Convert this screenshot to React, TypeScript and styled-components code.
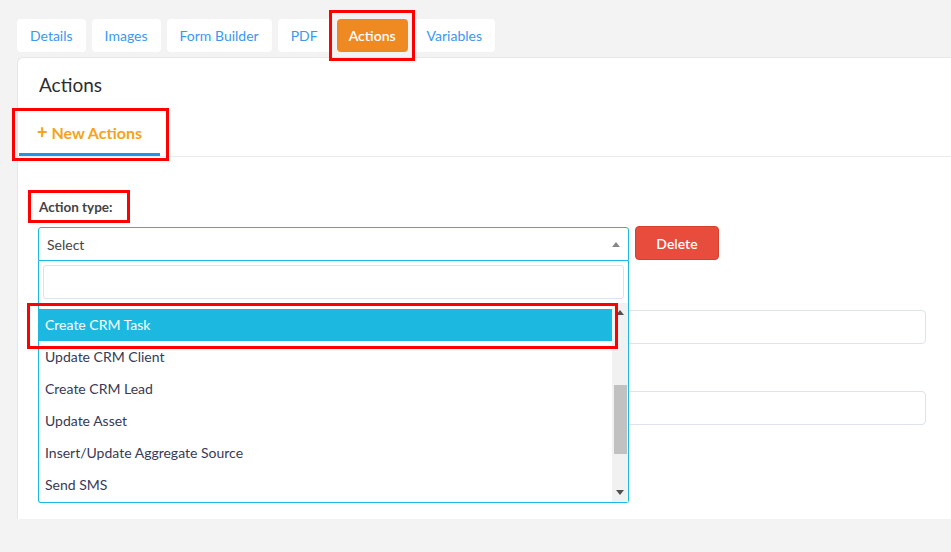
import styled, { createGlobalStyle } from "styled-components";

const GlobalStyle = createGlobalStyle`
html, body {
  margin: 0;
  padding: 0;
  background: #f3f3f3;
  overflow: hidden;
  font-family: Lato, "Noto Sans", "Liberation Sans", sans-serif;
}
* { box-sizing: border-box; }
`;

const Page = styled.div`
padding: 19px 0 0 17px;
`;

const TabBar = styled.nav`
display: flex;
gap: 6px;
`;

const Tab = styled.div<{ $active?: boolean }>`
position: relative;
height: 33px;
padding: 0 ${p => (p.$active ? "12px" : "13px")};
display: flex;
align-items: center;
border-radius: 4px;
font-size: 14px;
background: ${p => (p.$active ? "#ef8a23" : "#ffffff")};
color: ${p => (p.$active ? "#ffffff" : "#3b98ef")};
font-weight: ${p => (p.$active ? 600 : 400)};
`;

// red annotation frame drawn over the marked part
const Mark = styled.span<{ $t: number; $r: number; $b: number; $l: number }>`
position: absolute;
top: ${p => p.$t}px;
right: ${p => p.$r}px;
bottom: ${p => p.$b}px;
left: ${p => p.$l}px;
border: 3px solid #ff0000;
pointer-events: none;
z-index: 20;
`;

const Card = styled.section`
margin-top: 5px;
height: 462px;
background: #fff;
border: 1px solid #e6e6e6;
border-right: none;
border-bottom: none;
border-radius: 6px 0 0 0;
box-shadow: 0 5px 0 #e2e2e2;
`;

const CardHeader = styled.h2`
margin: 0;
padding: 14px 20px 0 21px;
height: 50px;
font-size: 19px;
line-height: 26px;
font-weight: 400;
color: #2e2e2e;
`;

const NavTabs = styled.div`
display: flex;
border-bottom: 1px solid #e8ebef;
padding-left: 1px;
`;

const NavItem = styled.div`
position: relative;
padding: 13px 0 9px;
line-height: 22px;
font-size: 16px;
font-weight: 700;
color: #f5a31c;
border-bottom: 3px solid #2592e6;
width: 141px;
text-align: center;
`;

const Plus = styled.span`
font-size: 18px;
font-weight: 900;
margin-right: 4px;
`;

const Body = styled.div`
padding: 39px 20px 0 20px;
`;

const Label = styled.div`
position: relative;
display: inline-block;
font-size: 13.5px;
line-height: 20px;
font-weight: 700;
color: #444;
margin-left: 1px;
margin-bottom: 10px;
`;

const Row = styled.div`
display: flex;
gap: 6px;
align-items: flex-start;
`;

const SelectWrap = styled.div`
position: relative;
width: 591px;
`;

const SelectBox = styled.div`
height: 34px;
border: 1px solid #1cb8e0;
border-radius: 3px 3px 0 0;
display: flex;
align-items: center;
justify-content: space-between;
padding: 0 8px 0 8px;
font-size: 14px;
color: #444;
`;

const Caret = styled.span<{ $down?: boolean; $color?: string }>`
width: 0;
height: 0;
border-left: 4px solid transparent;
border-right: 4px solid transparent;
${p =>
  p.$down
    ? `border-top: 5px solid ${p.$color || "#888"};`
    : `border-bottom: 5px solid ${p.$color || "#888"};`}
`;

const Dropdown = styled.div`
position: absolute;
top: 34px;
left: 0;
width: 100%;
background: #fff;
border: 1px solid #1cb8e0;
border-top: none;
border-radius: 0 0 3px 3px;
z-index: 10;
`;

const SearchArea = styled.div`
padding: 4px;
`;

const SearchInput = styled.div`
height: 34px;
border: 1px solid #dde3ea;
border-radius: 3px;
`;

const List = styled.div`
display: flex;
height: 199px;
`;

const Options = styled.div`
flex: 1;
padding-top: 6px;
`;

const Option = styled.div<{ $selected?: boolean }>`
position: relative;
height: 32px;
line-height: 32px;
padding-left: 6px;
font-size: 14px;
background: ${p => (p.$selected ? "#1cb8e0" : "transparent")};
color: ${p => (p.$selected ? "#fff" : "#383a55")};
`;

const ScrollBar = styled.div`
width: 16px;
background: #f1f1f1;
display: flex;
flex-direction: column;
align-items: center;
padding: 7px 0 7px;
`;

const Thumb = styled.div`
width: 13px;
height: 69px;
background: #c1c1c1;
margin-top: 70px;
margin-bottom: auto;
`;

const DeleteButton = styled.button`
width: 84px;
height: 34px;
margin-top: -1px;
background: #e74c3c;
border: 1px solid #d6402f;
border-radius: 4px;
color: #fff;
font-family: inherit;
font-size: 14px;
font-weight: 600;
`;

const Input = styled.div<{ $top: number }>`
width: 888px;
height: 34px;
margin-top: ${p => p.$top}px;
border: 1px solid #dde3ea;
border-radius: 4px;
`;

const tabs = ["Details", "Images", "Form Builder", "PDF", "Actions", "Variables"];
const options = [
  "Create CRM Task",
  "Update CRM Client",
  "Create CRM Lead",
  "Update Asset",
  "Insert/Update Aggregate Source",
  "Send SMS",
];

export default function App() {
  return (
    <>
      <GlobalStyle />
      <Page>
        <TabBar>
          {tabs.map(t => (
            <Tab key={t} $active={t === "Actions"}>
              {t}
              {t === "Actions" && <Mark $t={-9} $r={-7} $b={-9} $l={-8} />}
            </Tab>
          ))}
        </TabBar>
        <Card>
          <CardHeader>Actions</CardHeader>
          <NavTabs>
            <NavItem>
              <Plus>+</Plus>New Actions
              <Mark $t={0} $r={-9} $b={-8} $l={-7} />
            </NavItem>
          </NavTabs>
          <Body>
            <Label>
              Action type:
              <Mark $t={-7} $r={-17} $b={-6} $l={-11} />
            </Label>
            <Row>
              <SelectWrap>
                <SelectBox>
                  Select
                  <Caret />
                </SelectBox>
                <Dropdown>
                  <SearchArea>
                    <SearchInput />
                  </SearchArea>
                  <List>
                    <Options>
                      {options.map((o, i) => (
                        <Option key={o} $selected={i === 0}>
                          {o}
                          {i === 0 && <Mark $t={-6} $r={-6} $b={-8} $l={-12} />}
                        </Option>
                      ))}
                    </Options>
                    <ScrollBar>
                      <Caret $color="#505050" />
                      <Thumb />
                      <Caret $down $color="#505050" />
                    </ScrollBar>
                  </List>
                </Dropdown>
              </SelectWrap>
              <DeleteButton>Delete</DeleteButton>
            </Row>
            <Input $top={49} />
            <Input $top={47} />
          </Body>
        </Card>
      </Page>
    </>
  );
}
